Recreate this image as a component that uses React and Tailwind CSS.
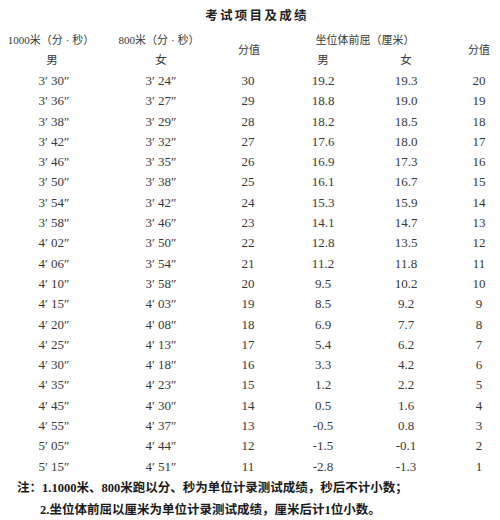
const rows = [
  ['3′ 30″', '3′ 24″', '30', '19.2', '19.3', '20'],
  ['3′ 36″', '3′ 27″', '29', '18.8', '19.0', '19'],
  ['3′ 38″', '3′ 29″', '28', '18.2', '18.5', '18'],
  ['3′ 42″', '3′ 32″', '27', '17.6', '18.0', '17'],
  ['3′ 46″', '3′ 35″', '26', '16.9', '17.3', '16'],
  ['3′ 50″', '3′ 38″', '25', '16.1', '16.7', '15'],
  ['3′ 54″', '3′ 42″', '24', '15.3', '15.9', '14'],
  ['3′ 58″', '3′ 46″', '23', '14.1', '14.7', '13'],
  ['4′ 02″', '3′ 50″', '22', '12.8', '13.5', '12'],
  ['4′ 06″', '3′ 54″', '21', '11.2', '11.8', '11'],
  ['4′ 10″', '3′ 58″', '20', '9.5', '10.2', '10'],
  ['4′ 15″', '4′ 03″', '19', '8.5', '9.2', '9'],
  ['4′ 20″', '4′ 08″', '18', '6.9', '7.7', '8'],
  ['4′ 25″', '4′ 13″', '17', '5.4', '6.2', '7'],
  ['4′ 30″', '4′ 18″', '16', '3.3', '4.2', '6'],
  ['4′ 35″', '4′ 23″', '15', '1.2', '2.2', '5'],
  ['4′ 45″', '4′ 30″', '14', '0.5', '1.6', '4'],
  ['4′ 55″', '4′ 37″', '13', '-0.5', '0.8', '3'],
  ['5′ 05″', '4′ 44″', '12', '-1.5', '-0.1', '2'],
  ['5′ 15″', '4′ 51″', '11', '-2.8', '-1.3', '1'],
];

const font = { fontFamily: '"Liberation Serif", "Noto Sans CJK SC", serif' };

const Dot = () => <span className="mx-[3px]">·</span>;

export default function App() {
  return (
    <div className="w-[500px] h-[520px] bg-white text-[#383838] overflow-hidden" style={font}>
      {/* title */}
      <div className="h-[30px] pt-[3px] pl-[14px] flex items-center justify-center">
        <span className="text-[12.5px] font-bold tracking-[2.3px] text-[#222]">考试项目及成绩</span>
      </div>

      <div className="grid grid-cols-[108px_106px_68px_82px_84px_52px] auto-rows-[20.3px] text-[11px]">
        {/* header */}
        <div className="flex items-center justify-center pr-[6px]">1000米（分<Dot />秒）</div>
        <div className="flex items-center justify-center pr-[4px]">800米（分<Dot />秒）</div>
        <div className="row-span-2 flex items-center justify-center pl-[2px]">分值</div>
        <div className="col-span-2 flex items-center justify-center">坐位体前屈（厘米）</div>
        <div className="row-span-2 flex items-center justify-center pl-[10px]">分值</div>
        <div className="flex items-center justify-center pr-[4px] text-[11.5px]">男</div>
        <div className="flex items-center justify-center text-[11.5px]">女</div>
        <div className="flex items-center justify-center text-[11.5px]">男</div>
        <div className="flex items-center justify-center text-[11.5px]">女</div>

        {/* data */}
        {rows.map((r, i) =>
          r.map((c, j) => (
            <div
              key={i + '-' + j}
              className={
                'flex items-center justify-center text-[13px] whitespace-pre ' +
                (j === 5 ? 'pl-[10px]' : '')
              }
            >
              {c}
            </div>
          ))
        )}
      </div>

      {/* notes */}
      <div className="text-[12.5px] leading-[22px] font-semibold text-[#1a1a1a]">
        <div className="pl-[17px] whitespace-nowrap">注：1.1000米、800米跑以分、秒为单位计录测试成绩，秒后不计小数；</div>
        <div className="pl-[40px] whitespace-nowrap">2.坐位体前屈以厘米为单位计录测试成绩，厘米后计1位小数。</div>
      </div>
    </div>
  );
}
